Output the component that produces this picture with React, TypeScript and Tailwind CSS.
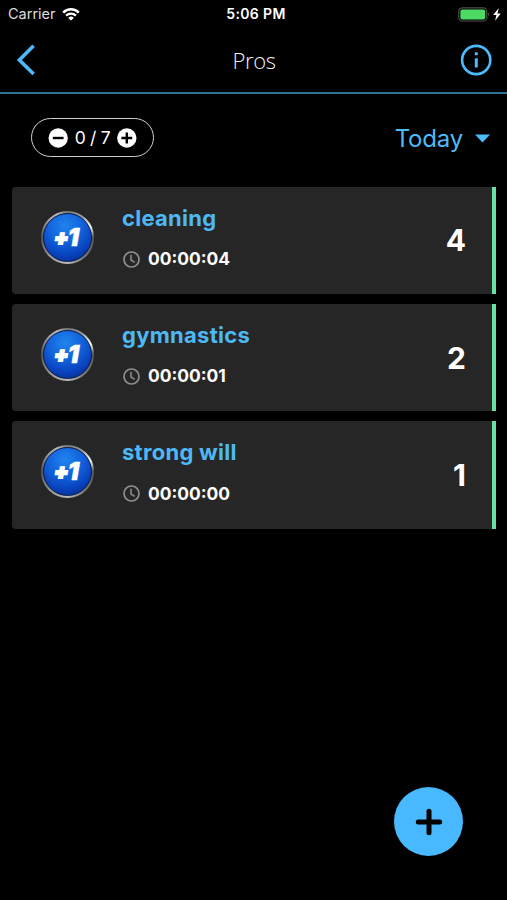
import React from "react";

interface Habit {
  id: number;
  name: string;
  time: string;
  count: number;
}

const habits: Habit[] = [
  { id: 1, name: "cleaning", time: "00:00:04", count: 4 },
  { id: 2, name: "gymnastics", time: "00:00:01", count: 2 },
  { id: 3, name: "strong will", time: "00:00:00", count: 1 },
];

function WifiIcon() {
  return (
    <svg width="18" height="13" viewBox="0 0 18 13" fill="none">
      <path d="M1.2 4.6a11 11 0 0 1 15.6 0" stroke="#fff" strokeWidth="2.5" />
      <path d="M4.1 7.6a7 7 0 0 1 9.8 0" stroke="#fff" strokeWidth="2.3" />
      <path d="M9 12.6 6.2 9.9a4 4 0 0 1 5.6 0z" fill="#fff" />
    </svg>
  );
}

function BatteryIcon() {
  return (
    <svg width="43" height="15" viewBox="0 0 43 15" fill="none">
      <rect x="0.8" y="0.8" width="28" height="13.2" rx="3.6" stroke="#4c4f4c" strokeWidth="1.2" />
      <rect x="2.4" y="2.4" width="24.8" height="10" rx="2" fill="#4cd964" />
      <path d="M30.2 5.2c1.4.5 1.4 3.9 0 4.4z" fill="#4c4f4c" />
      <path d="M40.8 1 35.2 8h3.2l-1.3 5.8L42.8 6.4h-3.4z" fill="#fff" />
    </svg>
  );
}

function StatusBar() {
  return (
    <div className="grid h-7 grid-cols-3 items-center text-white">
      <div className="flex items-center gap-[6px] pb-[2px] pl-2">
        <span className="text-[14.5px] leading-7 text-[#dcdcdc]">Carrier</span>
        <WifiIcon />
      </div>
      <span className="pb-[2px] pl-[5px] text-center text-[14px] leading-7 font-semibold tracking-[0.35px]">
        5:06 PM
      </span>
      <div className="flex justify-end pr-[6px] pb-[2px]">
        <BatteryIcon />
      </div>
    </div>
  );
}

function NavBar() {
  return (
    <div className="flex h-[66px] items-center justify-between border-b-2 border-[#2e7497] pr-[15px] pb-px pl-[16px]">
      <svg width="31" height="32" viewBox="0 0 31 32" fill="none">
        <path d="M17.6 1.8 3.4 16l14.2 14" stroke="#4dbaf9" strokeWidth="3.6" />
      </svg>
      <h1 className="pt-px pl-px font-['Open_Sans'] text-[22px] leading-8 font-light tracking-[-0.4px] text-[#f0f0f0]">
        Pros
      </h1>
      <svg width="32" height="32" viewBox="0 0 32 32" fill="none">
        <circle cx="16.2" cy="16" r="14.1" stroke="#4dbaf9" strokeWidth="2.6" />
        <rect x="14.8" y="8.3" width="3" height="3" rx="0.6" fill="#4dbaf9" />
        <rect x="14.8" y="14.3" width="3" height="9.2" rx="0.5" fill="#4dbaf9" />
      </svg>
    </div>
  );
}

function Counter() {
  return (
    <div className="flex h-[39px] w-[123px] items-center justify-center gap-[6px] rounded-full border-[1.5px] border-[#d0d0d0] text-white">
      <svg width="20" height="20" viewBox="0 0 20 20">
        <circle cx="10.2" cy="10" r="9.7" fill="#fff" />
        <path d="M4.8 10h10.8" stroke="#000" strokeWidth="2.4" />
      </svg>
      <span className="w-[37px] text-center text-[17.5px] leading-5 tracking-[-0.3px] whitespace-nowrap">
        0 / 7
      </span>
      <svg width="20" height="20" viewBox="0 0 20 20">
        <circle cx="9.8" cy="10" r="9.7" fill="#fff" />
        <path d="M4.4 10h10.8M9.8 4.6v10.8" stroke="#000" strokeWidth="2.4" />
      </svg>
    </div>
  );
}

function PlusOneBadge() {
  return (
    <div className="flex size-[53px] shrink-0 items-center justify-center rounded-full bg-[conic-gradient(from_0deg,#777,#999_35deg,#fff_65deg,#555_90deg,#777_140deg,#bbb_180deg,#999_220deg,#555_270deg,#999_310deg,#bbb_335deg,#777)]">
      <div className="flex size-[49px] items-center justify-center rounded-full border-[1.5px] border-[#07184a] bg-[radial-gradient(circle_at_45%_25%,#2184ee_0%,#1263dc_38%,#0842bd_68%,#04206c_100%)] pr-[2px] leading-none font-black text-white italic">
        <span className="-mr-px text-[21px] [-webkit-text-stroke:1.8px_#fff]">+</span>
        <span className="text-[25px] [-webkit-text-stroke:0.5px_#fff]">1</span>
      </div>
    </div>
  );
}

function HabitCard({ habit }: { habit: Habit }) {
  return (
    <div className="flex h-[107.5px] rounded-l-[4px] border-r-4 border-[#68e0a3] bg-[#262626] pr-[26px] pl-[29px]">
      <div className="pt-[24px]">
        <PlusOneBadge />
      </div>
      <div className="flex flex-col pt-[16px] pl-[28px]">
        <span className="text-[22px] leading-[30px] font-bold tracking-[0.28px] whitespace-nowrap text-[#4db8f4]">
          {habit.name}
        </span>
        <div className="mt-[14.5px] flex items-center gap-[8px] pl-[1px]">
          <svg width="17" height="17" viewBox="0 0 17 17" fill="none">
            <circle cx="8.5" cy="8.5" r="7.5" stroke="#8e8e8e" strokeWidth="1.7" />
            <path d="M8 3.8V9l3.6 2.3" stroke="#8e8e8e" strokeWidth="1.5" />
          </svg>
          <span className="text-[17.4px] leading-6 font-bold text-white">{habit.time}</span>
        </div>
      </div>
      <span className="ml-auto self-center text-[30px] leading-9 font-bold text-white">
        {habit.count}
      </span>
    </div>
  );
}

export default function App() {
  return (
    <div className="flex h-[900px] w-[507px] flex-col overflow-hidden bg-black font-['Inter',sans-serif]">
      <StatusBar />
      <NavBar />
      <div className="flex h-[92.5px] items-center justify-between pr-[17px] pb-[5px] pl-[31px]">
        <Counter />
        <div className="flex items-center gap-[12px] text-[#4dbaf9]">
          <span className="pt-[2px] text-[24px] leading-8 tracking-[-0.2px]">Today</span>
          <svg className="mt-[2px]" width="15" height="9" viewBox="0 0 15 9">
            <path d="M0 0.5h15L7.5 8.5z" fill="#4dbaf9" />
          </svg>
        </div>
      </div>
      <div className="flex flex-col gap-[9.8px] pr-[11px] pl-3">
        {habits.map((habit) => (
          <HabitCard key={habit.id} habit={habit} />
        ))}
      </div>
      <div className="mt-auto flex justify-end pr-[44px] pb-[44px]">
        <button className="flex size-[69px] items-center justify-center rounded-full bg-[#48b8ff]">
          <svg width="28" height="28" viewBox="0 0 28 28">
            <path
              d="M3.3 14h21.4M14 3.3v21.4"
              stroke="#000"
              strokeWidth="5"
              strokeLinecap="round"
            />
          </svg>
        </button>
      </div>
    </div>
  );
}
